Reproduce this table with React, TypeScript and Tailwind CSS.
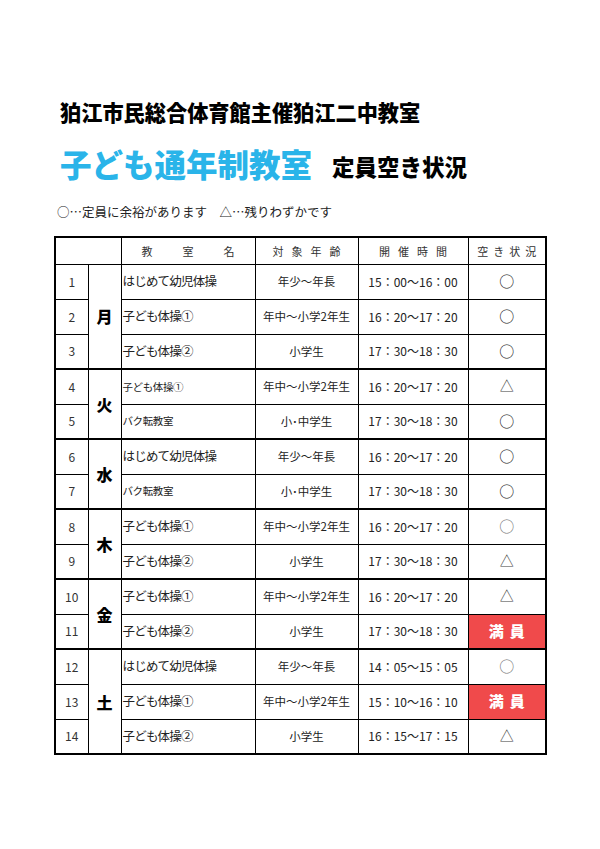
import React from "react";

type Row = {
  n: number;
  name: string;
  age: string;
  time: string;
  status: "o" | "t" | "full";
  small?: boolean;
  light?: boolean;
};

type Group = { day: string; rows: Row[] };

const groups: Group[] = [
  {
    day: "月",
    rows: [
      { n: 1, name: "はじめて幼児体操", age: "年少～年長", time: "15：00～16：00", status: "o" },
      { n: 2, name: "子ども体操①", age: "年中～小学2年生", time: "16：20～17：20", status: "o" },
      { n: 3, name: "子ども体操②", age: "小学生", time: "17：30～18：30", status: "o" },
    ],
  },
  {
    day: "火",
    rows: [
      { n: 4, name: "子ども体操①", age: "年中～小学2年生", time: "16：20～17：20", status: "t", small: true },
      { n: 5, name: "バク転教室", age: "小･中学生", time: "17：30～18：30", status: "o", small: true },
    ],
  },
  {
    day: "水",
    rows: [
      { n: 6, name: "はじめて幼児体操", age: "年少～年長", time: "16：20～17：20", status: "o" },
      { n: 7, name: "バク転教室", age: "小･中学生", time: "17：30～18：30", status: "o", small: true },
    ],
  },
  {
    day: "木",
    rows: [
      { n: 8, name: "子ども体操①", age: "年中～小学2年生", time: "16：20～17：20", status: "o", light: true },
      { n: 9, name: "子ども体操②", age: "小学生", time: "17：30～18：30", status: "t" },
    ],
  },
  {
    day: "金",
    rows: [
      { n: 10, name: "子ども体操①", age: "年中～小学2年生", time: "16：20～17：20", status: "t" },
      { n: 11, name: "子ども体操②", age: "小学生", time: "17：30～18：30", status: "full" },
    ],
  },
  {
    day: "土",
    rows: [
      { n: 12, name: "はじめて幼児体操", age: "年少～年長", time: "14：05～15：05", status: "o", light: true },
      { n: 13, name: "子ども体操①", age: "年中～小学2年生", time: "15：10～16：10", status: "full" },
      { n: 14, name: "子ども体操②", age: "小学生", time: "16：15～17：15", status: "t" },
    ],
  },
];

const font = { fontFamily: '"Noto Sans CJK JP", "Noto Sans", sans-serif' };

function Spread({ chars, gap }: { chars: string[]; gap: string }) {
  return (
    <div className={`flex justify-center ${gap}`}>
      {chars.map((c, i) => (
        <span key={i}>{c}</span>
      ))}
    </div>
  );
}

export default function App() {
  return (
    <div className="w-[600px] h-[849px] bg-white text-black pl-[54px] pt-[99px]" style={font}>
      <div className="ml-[6px] text-[21.2px] leading-[26px] font-black">
        狛江市民総合体育館主催狛江二中教室
      </div>
      <div className="ml-[6px] mt-[19px] flex items-end h-[38px]">
        <span className="text-[31.5px] leading-[38px] font-black text-[#2ab4e9]">
          子ども通年制教室
        </span>
        <span className="ml-[20px] mb-[2px] text-[22.5px] leading-[28px] font-black">定員空き状況</span>
      </div>
      <div className="ml-[3px] mt-[22px] text-[12.5px] leading-[16px] text-[#222]">
        ○…定員に余裕があります　△…残りわずかです
      </div>
      <table className="mt-[16px] border-collapse border-2 border-black table-fixed w-[491px]">
        <colgroup>
          <col className="w-[33px]" />
          <col className="w-[33px]" />
          <col className="w-[134px]" />
          <col className="w-[103px]" />
          <col className="w-[110px]" />
          <col className="w-[78px]" />
        </colgroup>
        <thead>
          <tr className="h-[27px] text-[11px] text-[#333]">
            <th colSpan={2} className="border border-black font-normal"></th>
            <th className="border border-black font-normal">
              <div className="flex justify-between px-[20px]">
                <span>教</span>
                <span>室</span>
                <span>名</span>
              </div>
            </th>
            <th className="border border-black font-normal">
              <Spread chars={["対", "象", "年", "齢"]} gap="gap-[8px]" />
            </th>
            <th className="border border-black font-normal">
              <Spread chars={["開", "催", "時", "間"]} gap="gap-[8px]" />
            </th>
            <th className="border border-black font-normal">
              <Spread chars={["空", "き", "状", "況"]} gap="gap-[5px]" />
            </th>
          </tr>
        </thead>
        <tbody>
          {groups.map((g) =>
            g.rows.map((r, i) => {
              const last = i === g.rows.length - 1;
              const bottom = last ? "border-b-2" : "border-b";
              return (
                <tr key={r.n} className="h-[35px]">
                  <td className={`border-x border-black ${bottom} text-center text-[12px] text-[#333]`}>{r.n}</td>
                  {i === 0 && (
                    <td
                      rowSpan={g.rows.length}
                      className="border-x border-black border-b-2 text-center text-[16px] font-black"
                    >
                      {g.day}
                    </td>
                  )}
                  <td
                    className={`border-x border-black ${bottom} pl-[1px] ${
                      r.small ? "text-[10.5px] tracking-[-0.4px]" : "text-[12.5px] tracking-[-0.8px]"
                    } text-[#222] whitespace-nowrap`}
                  >
                    {r.name}
                  </td>
                  <td className={`border-x border-black ${bottom} text-center text-[11.5px] text-[#222] whitespace-nowrap`}>{r.age}</td>
                  <td className={`border-x border-black ${bottom} text-center text-[12px] text-[#222] whitespace-nowrap`}>
                    {r.time}
                  </td>
                  {r.status === "full" ? (
                    <td className={`border-x border-black ${bottom} bg-[#f04a4b] text-center text-white text-[15px] font-black tracking-[6px] pl-[6px]`}>
                      満員
                    </td>
                  ) : r.status === "o" ? (
                    <td
                      className={`border-x border-black ${bottom} text-center text-[15px] leading-none pb-[2px] ${
                        r.light ? "text-[#777]" : "text-[#222]"
                      }`}
                    >
                      ○
                    </td>
                  ) : (
                    <td className={`border-x border-black ${bottom} text-center text-[14px] pb-[2px] text-[#444]`}>△</td>
                  )}
                </tr>
              );
            })
          )}
        </tbody>
      </table>
    </div>
  );
}
